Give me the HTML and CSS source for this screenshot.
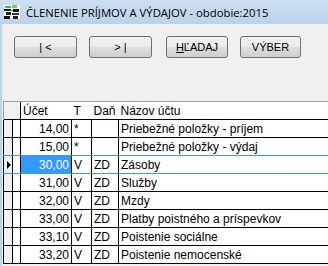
FILE: index.html
```html
<!DOCTYPE html>
<html lang="sk">
<head>
  <meta charset="UTF-8">
  <title>Členenie príjmov a výdajov</title>
  <link rel="stylesheet" href="styles.css">
</head>
<body>
  <div id="window">
    <div id="titlebar">
      <svg class="app-icon" width="16" height="14" viewBox="0 0 16 14">
        <rect x="0" y="0" width="16" height="14" fill="#ffffff"/>
        <rect x="1" y="1" width="6" height="2" fill="#4caf50"/>
        <rect x="8" y="0" width="5" height="3" fill="#8bc34a"/>
        <rect x="0" y="4" width="7" height="2" fill="#111"/>
        <rect x="9" y="4" width="6" height="3" fill="#111"/>
        <rect x="2" y="7" width="5" height="3" fill="#222"/>
        <rect x="8" y="8" width="7" height="2" fill="#333"/>
        <rect x="0" y="11" width="6" height="3" fill="#111"/>
        <rect x="9" y="11" width="5" height="3" fill="#222"/>
        <rect x="6" y="5" width="3" height="1" fill="#4a8bd6"/>
      </svg>
      <span>ČLENENIE PRÍJMOV A VÝDAJOV - obdobie:2015</span>
    </div>
    <div id="client">
      <div class="toolbar">
        <button class="btn first">| &lt;</button>
        <button class="btn last">&gt; |</button>
        <button class="btn find"><u>H</u>ĽADAJ</button>
        <button class="btn pick">VÝBER</button>
      </div>
      <div class="grid">
        <table>
          <colgroup>
            <col class="w-ind"><col class="w-ind2"><col class="w-ucet"><col class="w-t"><col class="w-dan"><col class="w-nazov">
          </colgroup>
          <thead>
            <tr>
              <th colspan="2" class="corner"></th>
              <th class="first-col">Účet</th>
              <th>T</th>
              <th>Daň</th>
              <th>Názov účtu</th>
            </tr>
          </thead>
          <tbody id="rows"></tbody>
        </table>
      </div>
    </div>
  </div>

  <script>
    const rows = [
      ['14,00', '*', '', 'Priebežné položky - príjem'],
      ['15,00', '*', '', 'Priebežné položky - výdaj'],
      ['30,00', 'V', 'ZD', 'Zásoby'],
      ['31,00', 'V', 'ZD', 'Služby'],
      ['32,00', 'V', 'ZD', 'Mzdy'],
      ['33,00', 'V', 'ZD', 'Platby poistného a príspevkov'],
      ['33,10', 'V', 'ZD', 'Poistenie sociálne'],
      ['33,20', 'V', 'ZD', 'Poistenie nemocenské'],
    ];
    const current = 2;
    const body = document.getElementById('rows');

    rows.forEach((r, i) => {
      const tr = document.createElement('tr');
      if (i === current) tr.className = 'current';
      if (i === current - 1) tr.className = 'before-current';
      tr.innerHTML =
        `<td class="ind">${i === current ? '<span class="arrow"></span>' : ''}</td>` +
        `<td class="ind2"></td>` +
        `<td class="num">${r[0]}</td>` +
        `<td>${r[1]}</td>` +
        `<td>${r[2]}</td>` +
        `<td>${r[3]}</td>`;
      body.appendChild(tr);
    });
  </script>
</body>
</html>
```

FILE: styles.css
```css
body {
  margin: 0;
  width: 328px;
  height: 266px;
  overflow: hidden;
  background: #f0f0f0;
}
#window {
  height: 266px;
  border-left: 2px solid #bed3ea;
  background: #f0f0f0;
  font-family: 'Liberation Sans', Arial, sans-serif;
}
#titlebar {
  height: 24px;
  margin-left: -2px;
  padding-left: 4px;
  display: flex;
  align-items: center;
  gap: 6px;
  background: linear-gradient(#cddff1, #bcd2ea);
  font-family: 'Open Sans', sans-serif;
  font-size: 11.3px;
  color: #000;
}
#titlebar .app-icon {
  flex: none;
}
.toolbar {
  display: flex;
  gap: 12px;
  padding: 12px 0 0 12px;
  height: 22px;
}
.btn {
  width: 63px;
  height: 22px;
  padding: 0;
  border: 1px solid #707070;
  border-radius: 3px;
  background: linear-gradient(#f2f2f2 0%, #ebebeb 50%, #dddddd 51%, #cfcfcf 100%);
  font-family: 'Liberation Sans', Arial, sans-serif;
  font-size: 11px;
  color: #000;
}
.btn.find {
  margin-left: 2px;
  width: 62px;
}
.btn.pick {
  width: 61px;
}
.grid {
  margin-top: 43px;
  margin-left: 1px;
  border-top: 1px solid #a0a0a0;
}
table {
  border-collapse: collapse;
  table-layout: fixed;
  width: 340px;
  font-size: 12px;
  background: #fff;
}
.w-ind { width: 9px; }
.w-ind2 { width: 8px; }
.w-ucet { width: 51px; }
.w-t { width: 20px; }
.w-dan { width: 27px; }
.w-nazov { width: 225px; }
th {
  height: 17px;
  padding: 0 2px;
  text-align: left;
  font-weight: normal;
  white-space: nowrap;
}
th.corner {
  background: #f0f0f0;
  border-left: 1px solid #a0a0a0;
}
th.first-col {
  border-left: 1px solid #000;
}
td {
  height: 17px;
  padding: 0 2px;
  white-space: nowrap;
  border: 1px solid #000;
}
td.ind {
  background: #f0f0f0;
  padding: 0;
  position: relative;
}
td.ind2 {
  padding: 0;
}
td.num {
  text-align: right;
}
tr.before-current td {
  border-bottom-color: #3399ff;
}
tr.current td {
  border-bottom-color: #3399ff;
}
tr.current td.num {
  background: #3399ff;
  color: #fff;
}
.arrow {
  position: absolute;
  left: 3px;
  top: 5px;
  border-left: 4px solid #000;
  border-top: 4px solid transparent;
  border-bottom: 4px solid transparent;
}
```
